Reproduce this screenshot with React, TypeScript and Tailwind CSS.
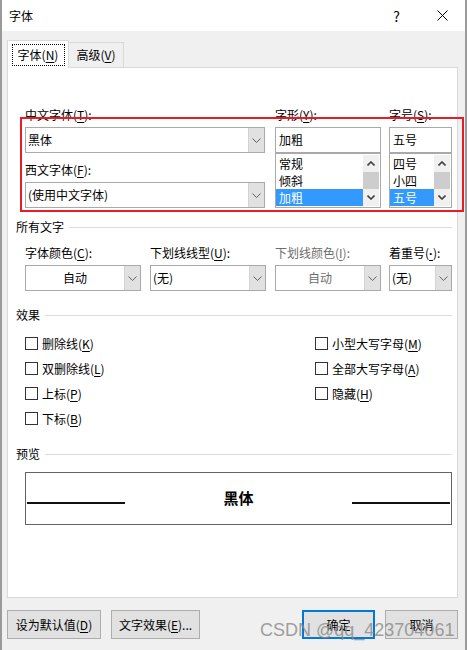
import React from 'react';

const ui = "font-['Noto_Sans_CJK_SC',sans-serif]";

function DownChevron() {
  return (
    <svg width="9" height="5" viewBox="0 0 9 5" className="block">
      <polyline points="0.5,0.5 4.5,4.5 8.5,0.5" fill="none" stroke="#606060" strokeWidth="1" />
    </svg>
  );
}

function ScrollArrow({ up }: { up?: boolean }) {
  return (
    <div className="flex h-[17px] items-center justify-center">
      <svg width="8" height="5" viewBox="0 0 8 5" className="block">
        <polyline
          points={up ? '0.5,4.5 4,1 7.5,4.5' : '0.5,0.5 4,4 7.5,0.5'}
          fill="none"
          stroke="#404040"
          strokeWidth="1.6"
        />
      </svg>
    </div>
  );
}

function Combo({
  className,
  text,
  center,
  gray,
}: {
  className: string;
  text: string;
  center?: boolean;
  gray?: boolean;
}) {
  return (
    <div className={`flex h-[26px] border border-[#a9a9a9] bg-white ${className}`}>
      <div
        className={`flex flex-1 items-center px-[2px] leading-[18px] ${center ? 'justify-center' : ''} ${
          gray ? 'text-[#6d6d6d]' : 'text-black'
        }`}
      >
        {text}
      </div>
      <div className="flex w-[16px] items-center justify-center border-l border-[#d4d4d4] bg-[#e1e1e1]">
        <DownChevron />
      </div>
    </div>
  );
}

function ListBox({ items, selected }: { items: string[]; selected: string }) {
  return (
    <div className="flex h-[55px] border border-[#a9a9a9] bg-white">
      <div className="flex-1 pt-px">
        {items.map((it) => (
          <div
            key={it}
            className={`h-[17px] pl-[3px] leading-[17px] ${it === selected ? 'bg-[#3399ff] text-white' : 'text-black'}`}
          >
            {it}
          </div>
        ))}
      </div>
      <div className="my-px mr-px flex w-[16px] flex-col bg-[#f0f0f0]">
        <ScrollArrow up />
        <div className="h-[17px] bg-[#cdcdcd]" />
        <div className="flex-1" />
        <ScrollArrow />
      </div>
    </div>
  );
}

function Label({
  pre,
  key_,
  post = '):',
  gray,
  keyClass = '',
}: {
  pre: string;
  key_: string;
  post?: string;
  gray?: boolean;
  keyClass?: string;
}) {
  return (
    <div className={`h-[18px] whitespace-nowrap leading-[18px] ${gray ? 'text-[#6d6d6d]' : 'text-black'}`}>
      {pre}
      <span className={`underline underline-offset-2 ${keyClass}`}>{key_}</span>
      {post}
    </div>
  );
}

function Section({ title }: { title: string }) {
  return (
    <div className="flex h-[18px] items-center">
      <span className="leading-[18px]">{title}</span>
      <div className="ml-[5px] h-px flex-1 bg-[#dcdcdc]" />
    </div>
  );
}

function Check({ pre, key_ }: { pre: string; key_: string }) {
  return (
    <div className="flex h-[25px] items-center">
      <div className="h-[13px] w-[13px] border border-[#333333] bg-white" />
      <span className="ml-[4px] leading-[18px]">
        {pre}(<span className="underline underline-offset-2">{key_}</span>)
      </span>
    </div>
  );
}

function Button({ className, children }: { className: string; children: React.ReactNode }) {
  return (
    <div className={`flex h-[29px] items-center justify-center bg-[#e1e1e1] leading-[18px] ${className}`}>
      {children}
    </div>
  );
}

export default function App() {
  return (
    <div className={`relative h-[650px] w-[467px] overflow-hidden border-x-2 border-[#9a9a9a] bg-[#f0f0f0] text-[12px] text-black ${ui}`}>
      {/* title bar */}
      <div className="flex h-[31px] items-center bg-white pl-[7px]">
        <span className="text-[12px] leading-[18px]">字体</span>
        <div className="flex-1" />
        <span className="text-[14px] leading-[18px]">?</span>
        <svg width="11" height="11" viewBox="0 0 11 11" className="ml-[37px] mr-[17px] block">
          <path d="M0.5 0.5 L10.5 10.5 M10.5 0.5 L0.5 10.5" stroke="#000" strokeWidth="1" />
        </svg>
      </div>

      {/* tabs */}
      <div className="flex h-[36px] items-end pl-[5px]">
        <div className="relative z-10 -mb-px flex h-[28px] w-[62px] items-start justify-center border border-b-0 border-[#d9d9d9] bg-white pt-[3px]">
          <div className="flex h-[22px] w-[53px] items-center justify-center border border-dotted border-black leading-[18px]">
            字体(<span className="underline underline-offset-2">N</span>)
          </div>
        </div>
        <div className="-ml-px flex h-[25px] w-[56px] items-center justify-center border border-b-0 border-[#d9d9d9] leading-[18px]">
          高级(<span className="underline underline-offset-2">V</span>)
        </div>
      </div>

      {/* panel */}
      <div className="ml-[5px] h-[531px] w-[451px] border border-[#d9d9d9] bg-white pl-[8px] pr-[5px] pt-[38px]">
        <div className="flex pl-[9px]">
          <div className="w-[240px]">
            <Label pre="中文字体(" key_="T" />
            <Combo className="mt-[3px] w-[240px]" text="黑体" />
            <div className="mt-[8px]">
              <Label pre="西文字体(" key_="F" />
            </div>
            <Combo className="mt-[3px] w-[240px]" text="(使用中文字体)" />
          </div>
          <div className="ml-[10px] w-[106px]">
            <Label pre="字形(" key_="Y" />
            <div className="mt-[3px] flex h-[26px] items-center border border-[#a9a9a9] bg-white px-[3px] leading-[18px]">
              加粗
            </div>
            <ListBox items={['常规', '倾斜', '加粗']} selected="加粗" />
          </div>
          <div className="ml-[8px] w-[63px]">
            <Label pre="字号(" key_="S" />
            <div className="mt-[3px] flex h-[26px] items-center border border-[#a9a9a9] bg-white px-[3px] leading-[18px]">
              五号
            </div>
            <ListBox items={['四号', '小四', '五号']} selected="五号" />
          </div>
        </div>

        <div className="mt-[10px]">
          <Section title="所有文字" />
        </div>

        <div className="mt-[8px] flex pl-[9px]">
          <div className="w-[116px]">
            <Label pre="字体颜色(" key_="C" />
            <Combo className="mt-[3px] w-[116px]" text="自动" center />
          </div>
          <div className="ml-[9px] w-[116px]">
            <Label pre="下划线线型(" key_="U" />
            <Combo className="mt-[3px] w-[116px]" text="(无)" />
          </div>
          <div className="ml-[9px] w-[106px]">
            <Label pre="下划线颜色(" key_="I" gray />
            <Combo className="mt-[3px] w-[106px]" text="自动" center gray />
          </div>
          <div className="ml-[8px] w-[63px]">
            <Label pre="着重号(" key_="·" keyClass="font-['Liberation_Sans',sans-serif] font-bold" />
            <Combo className="mt-[3px] w-[63px]" text="(无)" />
          </div>
        </div>

        <div className="mt-[15px]">
          <Section title="效果" />
        </div>

        <div className="mt-[7px] flex pl-[9px]">
          <div className="w-[290px]">
            <Check pre="删除线" key_="K" />
            <Check pre="双删除线" key_="L" />
            <Check pre="上标" key_="P" />
            <Check pre="下标" key_="B" />
          </div>
          <div>
            <Check pre="小型大写字母" key_="M" />
            <Check pre="全部大写字母" key_="A" />
            <Check pre="隐藏" key_="H" />
          </div>
        </div>

        <div className="mt-[14px]">
          <Section title="预览" />
        </div>

        <div className="ml-[9px] mt-[9px] flex h-[53px] w-[427px] items-start border border-[#646464]">
          <div className="ml-px mt-[29px] h-[2px] w-[98px] bg-[#111111]" />
          <div className="mt-[15px] flex-1 text-center text-[15px] font-bold leading-[20px]">黑体</div>
          <div className="mr-px mt-[29px] h-[2px] w-[98px] bg-[#111111]" />
        </div>
      </div>

      {/* buttons */}
      <div className="mt-[12px] flex pl-[5px] pr-[7px]">
        <Button className="w-[94px] border border-[#adadad]">
          <span>
            设为默认值(<span className="underline underline-offset-2">D</span>)
          </span>
        </Button>
        <Button className="ml-[10px] w-[89px] border border-[#adadad]">
          <span>
            文字效果(<span className="underline underline-offset-2">E</span>)...
          </span>
        </Button>
        <div className="flex-1" />
        <Button className="w-[73px] border-2 border-[#0078d7]">确定</Button>
        <Button className="ml-[10px] w-[73px] border border-[#adadad]">取消</Button>
      </div>

      {/* annotation */}
      <div className="pointer-events-none absolute left-[18px] top-[117px] h-[95px] w-[444px] border-2 border-[#e81c24]" />

      {/* watermark */}
      <div className="pointer-events-none absolute left-[258px] top-[620px] whitespace-nowrap font-['Liberation_Sans',sans-serif] text-[18px] leading-[20px] text-[#8a8a8a] opacity-80">
        CSDN @qq_423704061
      </div>
    </div>
  );
}
